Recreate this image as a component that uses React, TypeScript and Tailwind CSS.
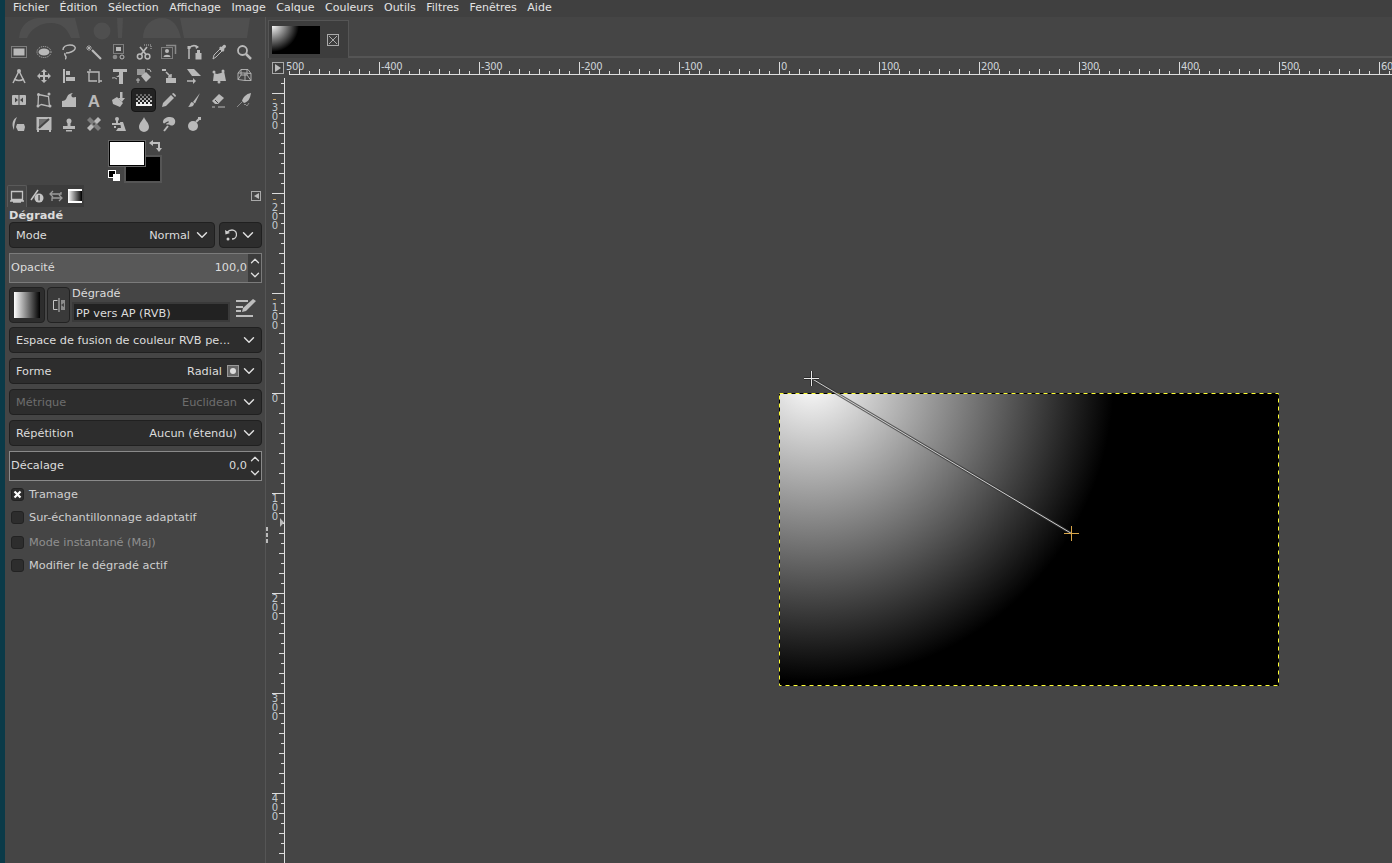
import React from "react";
import { ChevronDown, ChevronUp } from "lucide-react";

const FONT = "font-['DejaVu_Sans',sans-serif]";
const C = "#b9b9b9";

const dotted = { stroke: C, strokeWidth: 1, strokeDasharray: "1 1", fill: "none" };
const line = { stroke: C, fill: "none", strokeWidth: 1.5 };

const GRAD_FILL = ["#666", "#808080", "#a0a0a0", "#c4c4c4", "#e8e8e8", "#f2f2f2"];

const icons: React.ReactNode[] = [
  // row 1
  <><rect x="0.5" y="2.5" width="15" height="11" {...dotted} /><rect x="2.5" y="4.500" width="11" height="7" fill={C} /></>,
  <><ellipse cx="8" cy="8" rx="7" ry="5.5" {...dotted} /><ellipse cx="8" cy="8" rx="5.5" ry="3.5" fill={C} /></>,
  <><path d="M2 6c0-3 3-5 7-5s6 2 5 4-5 4-9 4M4 9c-1 2 1 3 1 4s0 2-1 2" {...line} /></>,
  <><path d="M6 6l9 9" stroke={C} strokeWidth="2.2" /><path d="M3 1v6M0 4h6M1 2l4 4M5 2l-4 4" stroke={C} strokeWidth="0.8" /></>,
  <><rect x="2.5" y="0.5" width="10" height="9" {...dotted} /><rect x="5" y="3" width="5" height="4" fill={C} /><circle cx="4" cy="13" r="2.3" fill="#8a8a8a" /><circle cx="11" cy="13" r="2" fill="none" stroke={C} /></>,
  <><circle cx="3.8" cy="12.5" r="2.4" {...line} /><circle cx="11.5" cy="12.5" r="2.4" {...line} /><path d="M5 10.5L11 3M10 10.5L4 3" stroke={C} strokeWidth="1.7" /><path d="M8 1h7v4" {...dotted} /></>,
  <><path d="M5 1.5h9.5V10" stroke="#8a8a8a" strokeWidth="1.5" fill="none" /><rect x="0.5" y="3.5" width="11" height="11" {...dotted} /><circle cx="6" cy="7" r="2" fill={C} /><path d="M2.5 13c0-3 7-3 7 0z" fill={C} /></>,
  <><path d="M3 15V4M3 4c3-3 6-3 9-1" {...line} /><path d="M9 1l4 2-3 2z" fill={C} /><rect x="1.5" y="2" width="3" height="3" fill={C} /><rect x="9.5" y="9" width="6" height="6.5" fill={C} /><rect x="11" y="6" width="3" height="3" fill={C} /></>,
  <><path d="M2 15l1-4 6-6 2 2-6 6z" fill="none" stroke={C} /><path d="M8 4l4 4 1.5-2-.5-1 2-2c0-2-1-2.500-2.500-2l-2 2-1-.5z" fill={C} /></>,
  <><circle cx="6.500" cy="6.500" r="4.500" fill="none" stroke={C} strokeWidth="1.800" /><path d="M10 10l5 5" stroke={C} strokeWidth="2.500" /></>,
  // row 2
  <><path d="M8 3L2 15M8 3l6 12M3 11q5 3 10 0" {...line} /><circle cx="8" cy="3" r="2" fill={C} /></>,
  <><path d="M8 1l3 3H9v3h3V5l3 3-3 3V9H9v3h2l-3 3-3-3h2V9H4v2L1 8l3-3v2h3V4H5z" fill={C} /></>,
  <><rect x="2" y="1" width="2" height="14" fill={C} /><rect x="5" y="3" width="4" height="4" fill={C} /><rect x="5" y="9" width="9" height="4" fill={C} /></>,
  <><path d="M1 4h3M4 1v2M4 4h9v8M3 4v9h8" stroke={C} strokeWidth="1.400" fill="none" /><path d="M13 12v3M13 13h3" stroke={C} strokeWidth="1.400" /></>,
  <><path d="M2 1h14v3h-4v12H8V9H5l3-2V4H2z" fill={C} /><path d="M1 10q3-1 5 1" stroke={C} fill="none" /></>,
  <><rect x="1" y="1" width="8" height="6" fill="#9a9a9a" /><path d="M5 8l5-4 5 5-5 5z" fill={C} /><path d="M11 1q4 0 4 3M2 10v5M0 12h4" stroke={C} fill="none" /></>,
  <><rect x="1" y="1" width="4" height="2" fill={C} /><path d="M5 4l5 5M7 9h3V6" stroke={C} strokeWidth="1.500" fill="none" /><rect x="5" y="10" width="10" height="5" fill={C} /></>,
  <><path d="M1 1h7l7 7H6z" fill={C} /><path d="M1 13h7" stroke={C} strokeWidth="1.500" /><path d="M7 10l3 3-3 3z" fill={C} /></>,
  <><path d="M2 13L3 5l3 1 4-1 3-2 2 10z" fill={C} /><circle cx="3" cy="4" r="1.500" fill={C} /><circle cx="12" cy="3" r="1.500" fill={C} /><circle cx="8" cy="14" r="1.500" fill={C} /></>,
  <><path d="M5 1.500h7l3 4v7H9l-7-1V5zM5 1.500V7l-3 4.500M5 7h6l4 5.500M11 7V1.500M2 5h7l6 .5M9 5v7.500" stroke={C} fill="none" strokeWidth="0.900" /></>,
  // row 3
  <><rect x="1" y="3" width="14" height="10" rx="1" fill={C} /><path d="M7 8L4 5.500v5zM9 8l3-2.500v5z" fill="#454545" /><rect x="7.500" y="3" width="1" height="10" fill="#454545" /></>,
  <><path d="M2.500 2.500l10 2 1 10-8-2-3.500 1.500z" stroke={C} strokeWidth="1.300" fill="none" /><circle cx="2.500" cy="2.500" r="1.500" fill={C} /><circle cx="13" cy="2" r="1.500" fill={C} /><circle cx="14" cy="14" r="1.500" fill={C} /><circle cx="2" cy="14" r="1.500" fill={C} /></>,
  <><path d="M1 15V9c2 0 4-1 5-4s4-4 6-4c-2 1-2 3-1 4s3 0 4 0v10z" fill={C} /></>,
  <text x="8" y="14.500" textAnchor="middle" fontFamily="'Liberation Sans',sans-serif" fontWeight="700" fontSize="17" fill={C}>A</text>,
  <><path d="M1 8l5-3 6 6-3 4-7-3z" fill={C} /><rect x="9" y="0" width="2.500" height="7" fill={C} /><path d="M7 6h7l-3.200 4z" fill={C} /></>,
  <>
    {Array.from({ length: 6 }).flatMap((_, r) =>
      Array.from({ length: 8 }).map((_, c) =>
        (r + c) % 2 === 0 || r === 5 ? <rect key={r + "-" + c} x={c * 2} y={2 + r * 2} width="2" height="2" fill={GRAD_FILL[r]} /> : null
      )
    )}
    <rect x="0" y="12" width="16" height="2" fill="#f2f2f2" />
  </>,
  <><path d="M1 15l1-4 8-8 3 3-8 8z" fill={C} /><path d="M11 2l1-1c1 0 3 2 3 3l-1 1z" fill={C} /></>,
  <><path d="M14 1L7 10l2 1.500z" fill={C} /><path d="M6 10c-2 .5-2 4-4 5 4 0 6-1 6-3.500z" fill={C} /></>,
  <><path d="M1 9l7-7 5 4-6 6H4z" fill={C} /><path d="M4 8l3 3" stroke="#454545" /><path d="M1 15h3M7 15h7" stroke={C} /></>,
  <><path d="M15 1C10 2 7 5 6 9l2 2c4-1 6-4 7-10z" fill={C} /><path d="M1 15l5-5M8 13l1-1 2 2 2-3" stroke="#8a8a8a" fill="none" /></>,
  // row 4
  <><path d="M6 1C2 3 0 8 3 14 3 9 4 5 6 1z" fill={C} /><path d="M6 8h7l1 3-1 4H7l-2-4z" fill={C} /></>,
  <><rect x="0.500" y="1" width="15" height="13" fill={C} /><path d="M3 12L13 3H3z" fill="#6f6f6f" /><path d="M3 12L13 3" stroke="#454545" strokeWidth="2" /><rect x="1" y="14" width="2" height="2" fill={C} /><rect x="13" y="14" width="2" height="2" fill={C} /></>,
  <><circle cx="8" cy="5" r="2.500" fill={C} /><rect x="6.500" y="6" width="3" height="4" fill={C} /><path d="M2 10h12v3H2z" fill={C} /><rect x="5" y="14" width="6" height="1.500" fill={C} /></>,
  <><path d="M12 1l3 3L4 15l-3-3z" fill={C} /><path d="M4 1l11 11-3 3L1 4z" fill="#7c7c7c" /><circle cx="8" cy="8" r="1" fill="#454545" /></>,
  <><circle cx="6" cy="3" r="2" fill={C} /><rect x="5" y="4" width="2" height="3" fill={C} /><path d="M1 7h9v2H1zM3 10h2v2H3z" fill={C} /><path d="M9 6l3 0 3 9H5l2-3h3z" fill={C} /></>,
  <path d="M8 1c1 3 5 6 5 10a5 5 0 0 1-10 0c0-4 4-7 5-10z" fill={C} />,
  <><path d="M2 6c0-3 3-5 7-5s6 3 5 6-4 3-5 2-4 0-4-1 3-1 3-2-3 0-4 1-2 0-2-1z" fill={C} /><path d="M3 15l4-5" stroke={C} strokeWidth="2" /></>,
  <><circle cx="7" cy="10" r="5" fill={C} /><path d="M10 6l4-4" stroke={C} strokeWidth="2.200" /><rect x="12" y="1" width="3" height="3" fill={C} /></>,
];

function Combo({ label, value, disabled, extra }: { label: string; value?: string; disabled?: boolean; extra?: React.ReactNode }) {
  return (
    <div className="flex h-[26px] items-center rounded-[4px] border border-[#202020] bg-[#2d2d2d] pl-[6px] pr-[3px]">
      <span className={"pt-[2px] " + (disabled ? "text-[#6d6d6d]" : "text-[#dcdcdc]")}>{label}</span>
      <span className={"ml-auto pt-[2px] " + (disabled ? "text-[#6d6d6d]" : "text-[#dcdcdc]")}>{value}</span>
      {extra}
      <ChevronDown size={18} strokeWidth={1.9} className={(extra ? "ml-[1px]" : "ml-[3px]") + " text-[#e0e0e0]"} />
    </div>
  );
}

function Spin({ light }: { light?: boolean }) {
  return (
    <div className={"ml-[1px] flex h-full w-[13px] flex-col items-center justify-between " + (light ? "bg-[#2e2e2e]" : "bg-[#3c3c3c]")}>
      <ChevronUp size={14} strokeWidth={2.2} className="text-[#e0e0e0]" />
      <ChevronDown size={14} strokeWidth={2.2} className="text-[#e0e0e0]" />
    </div>
  );
}

function Check({ label, checked, muted, className }: { label: string; checked?: boolean; muted?: boolean; className?: string }) {
  return (
    <div className={"flex h-[13px] items-center gap-[5px] pl-[2px] " + (className ?? "")}>
      <div className="flex h-[13px] w-[13px] items-center justify-center rounded-[3px] border border-[#222] bg-[#2d2d2d]">
        {checked && (
          <svg width="9" height="9" viewBox="0 0 9 9">
            <path d="M1.500 1.500l6 6M7.500 1.500l-6 6" stroke="#fff" strokeWidth="2.200" />
          </svg>
        )}
      </div>
      <span className={muted ? "text-[#8f8f8f]" : "text-[#cfcfcf]"}>{label}</span>
    </div>
  );
}

function HRuler() {
  const ticks = [];
  for (let x = 290; x <= 1392; x += 10) {
    const rel = x - 780;
    const px = x - 1 - 268 + 0.5;
    if (rel % 100 === 0) ticks.push(<path key={x} d={`M${px} 2V14`} stroke="#ddd" />);
    else ticks.push(<path key={x} d={`M${px} ${rel % 20 === 0 ? 9 : 11}V14`} stroke="#ddd" />);
  }
  const labels = [];
  for (let v = -500; v <= 600; v += 100) {
    labels.push(
      <text key={v} x={v === -500 ? 18 : 779 + v - 268 + 2} y={10} fontFamily="'DejaVu Sans',sans-serif" fontSize="10" letterSpacing="-0.4" fill="#cdd3d8">
        {v === -500 ? "500" : v}
      </text>
    );
  }
  return (
    <svg width="1124" height="15" className="block">
      {ticks}
      {labels}
      <path d="M21 14.500H1124" stroke="#ddd" />
    </svg>
  );
}

function VRuler() {
  const ticks = [];
  for (let y = 83; y <= 863; y += 10) {
    const rel = y - 393;
    const yy = y - 78 + 0.5;
    if (rel % 100 === 0) ticks.push(<path key={y} d={`M4 ${yy}H16`} stroke="#ddd" />);
    else ticks.push(<path key={y} d={`M${rel % 20 === 0 ? 11 : 13} ${yy}H16`} stroke="#ddd" />);
  }
  const labels = [];
  for (let v = -300; v <= 400; v += 100) {
    const s = String(Math.abs(v)).split("");
    const base = 393 + v - 78;
    if (v < 0) labels.push(<path key={"m" + v} d={`M5 ${base + 6.500}H8`} stroke="#c9a15e" />);
    s.forEach((d, i) => {
      const off = v < 0 ? 18 + i * 9 : 9 + i * 9;
      labels.push(
        <text key={v + "-" + i} x={7} y={base + off} textAnchor="middle" fontFamily="'DejaVu Sans',sans-serif" fontSize="10" fill="#c3cad0">
          {d}
        </text>
      );
    });
  }
  return (
    <svg width="17" height="785" className="block shrink-0">
      {ticks}
      {labels}
      <path d="M16.500 0V785" stroke="#ddd" />
      <path d="M12 440l4 4.500-4 4.500z" fill="#bdbdbd" />
    </svg>
  );
}

const MENUS = ["Fichier", "Édition", "Sélection", "Affichage", "Image", "Calque", "Couleurs", "Outils", "Filtres", "Fenêtres", "Aide"];

export default function App() {
  return (
    <div className={"flex h-[863px] w-[1392px] overflow-hidden bg-[#454545] text-[11.300px] leading-none text-[#dcdcdc] " + FONT}>
      <div className="w-[5px] shrink-0 bg-[#0b3a48]" />
      <div className="flex min-w-0 flex-1 flex-col">
        <div className="flex h-[17px] shrink-0 items-center bg-[#404040] pb-[2px] pl-[2.750px] text-[11px] text-[#e4e4e4]">
          {MENUS.map((m) => (
            <span key={m} className="px-[5.250px]">{m}</span>
          ))}
        </div>
        <div className="flex min-h-0 flex-1">
          {/* Left dock */}
          <div className="relative w-[261px] shrink-0 border-r border-[#555]">
            <svg className="absolute left-0 top-0" width="255" height="23" viewBox="0 0 255 23">
              <path d="M14 21C15 8 24 2 33 1H70L75 21H66C62 11 56 6 46 6 35 6 26 12 22 21z" fill="#4f4f4f" />
              <circle cx="97" cy="14" r="8.500" fill="#4f4f4f" />
              <path d="M112 1h6l-1 20h-4z" fill="#4f4f4f" />
              <path d="M138 21c0-12 8-20 19-20s16 8 19 20z" fill="#4f4f4f" />
              <path d="M175 1h70l-3 20h-63z" fill="#4f4f4f" />
            </svg>
            <div className="relative grid grid-cols-[repeat(10,25px)] auto-rows-[24px] pl-[1px] pt-[23px]">
              {icons.map((ic, i) => (
                <div key={i} className={"flex items-center justify-center " + (i === 25 ? "rounded-[4px] border border-[#161616] bg-[#232323]" : "")}>
                  <svg width="16" height="16" viewBox="0 0 16 16">{ic}</svg>
                </div>
              ))}
            </div>
            {/* Colors */}
            <div className="relative ml-[103px] mt-[4px] h-[45px] w-[56px]">
              <div className="absolute left-[16px] top-[15px] h-[28px] w-[38px] border-2 border-[#555] bg-black" />
              <div className="absolute left-[1px] top-[1px] h-[25px] w-[36px] border border-black bg-white outline outline-1 outline-[#666]" />
              <svg className="absolute left-[41px] top-0" width="13" height="13" viewBox="0 0 13 13">
                <path d="M0 3l4-3v6zM4 2h7v6H9V4H4zM7 8h6l-3 4z" fill="#bdbdbd" />
              </svg>
              <div className="absolute left-0 top-[30px] h-[8px] w-[8px] border border-white bg-black" />
              <div className="absolute left-[5px] top-[34px] h-[7px] w-[7px] bg-white" />
            </div>
            {/* Tabs */}
            <div className="flex h-[22px] items-center">
              <div className="ml-[2px] flex h-full w-[20px] items-center justify-center rounded-t-[2px] border border-b-0 border-[#5a5a5a]">
                <svg width="14" height="13" viewBox="0 0 14 13"><path d="M1.500 1.500h11v8h-11zM3 12h8M0 11h14" stroke="#c4c4c4" fill="none" strokeWidth="1.300" /></svg>
              </div>
              <div className="flex h-full bg-[#3c3c3c]">
                <div className="flex w-[19px] items-center justify-center">
                  <svg width="14" height="14" viewBox="0 0 14 14"><path d="M1 11L8 1" stroke="#c4c4c4" strokeWidth="1.500" /><circle cx="9" cy="9" r="4.500" fill="#c4c4c4" /><rect x="8.400" y="6" width="1.300" height="5.500" fill="#3c3c3c" /></svg>
                </div>
                <div className="flex w-[19px] items-center justify-center">
                  <svg width="14" height="12" viewBox="0 0 14 12"><path d="M1 4h11V2M4 1L1 4l3 3M13 8H3v3M10 5l3 3-3 3" stroke="#9a9a9a" fill="none" strokeWidth="1.300" /></svg>
                </div>
                <div className="flex w-[19px] items-center justify-center">
                  <div className="h-[14px] w-[14px] border-y-2 border-white bg-black bg-[linear-gradient(to_right,#fff,#000)]" />
                </div>
              </div>
              <div className="ml-auto mr-[4px] flex h-[10px] w-[10px] items-center justify-center border border-[#aaa]">
                <div className="h-0 w-0 border-y-[3px] border-r-[5px] border-y-transparent border-r-[#bbb]" />
              </div>
            </div>
            {/* Options */}
            <div className="flex flex-col pl-[4px] pr-[3px]">
              <div className="mt-[3px] flex h-[12px] items-center font-bold text-[#dcdcdc]">Dégradé</div>
              <div className="flex gap-[4px]">
                <div className="flex h-[26px] w-[206px] shrink-0 items-center rounded-[4px] border border-[#202020] bg-[#2d2d2d] pl-[6px] pr-[3px]">
                  <span className="pt-[2px]">Mode</span>
                  <span className="ml-auto pt-[2px]">Normal</span>
                  <ChevronDown size={18} strokeWidth={1.9} className="ml-[3px] text-[#e0e0e0]" />
                </div>
                <div className="flex h-[26px] w-[43px] shrink-0 items-center justify-center gap-[2px] rounded-[4px] border border-[#202020] bg-[#2d2d2d]">
                  <svg width="12" height="12" viewBox="0 0 12 12"><path d="M2 3.500Q4 1 7 1a4.500 4.500 0 0 1 0 9" stroke="#cfcfcf" fill="none" strokeWidth="1.300" /><path d="M0 1l.500 4.500L5 4z" fill="#cfcfcf" /><circle cx="3" cy="10" r="1.500" fill="#cfcfcf" /></svg>
                  <ChevronDown size={18} strokeWidth={1.9} className="text-[#e0e0e0]" />
                </div>
              </div>
              <div className="mt-[5px] flex h-[30px] items-center border border-[#7b7b7b] bg-[#585858] pl-[1px] text-[#dcdcdc]">
                <span>Opacité</span>
                <span className="ml-auto">100,0</span>
                <Spin />
              </div>
              <div className="mt-[4px] flex h-[36px]">
                <div className="flex h-[36px] w-[36px] items-center justify-center rounded-[4px] border border-[#222] bg-[#2d2d2d]">
                  <div className="h-[26px] w-[26px] bg-[linear-gradient(to_right,#fff,#000)]" />
                </div>
                <div className="ml-[2px] flex h-[36px] w-[23px] items-center justify-center rounded-[4px] border border-[#222] bg-[#3a3a3a]">
                  <svg width="14" height="14" viewBox="0 0 14 14"><path d="M5.500 2.500h-4v9h4M7 0v14" stroke="#c4c4c4" fill="none" /><rect x="9" y="2" width="4" height="10" fill="#8c8c8c" /><path d="M9 7l3-2v4z" fill="#454545" /></svg>
                </div>
                <div className="ml-[2px] flex w-[158px] flex-col">
                  <div className="flex h-[13px] items-center text-[#dcdcdc]">Dégradé</div>
                  <div className="mt-[2px] flex h-[20px] items-center border-2 border-[#3a3a3a] bg-[#222] pl-[2px] pt-[3px] text-[#dcdcdc]">PP vers AP (RVB)</div>
                </div>
                <svg className="ml-[6px] mt-[11px]" width="22" height="20" viewBox="0 0 22 20">
                  <path d="M0 3h12M0 9h7M0 13h5M0 18h17" stroke="#bdbdbd" strokeWidth="2" />
                  <path d="M6 14l1-4 10-9 3 2L10 13z" fill="#bdbdbd" />
                </svg>
              </div>
              <div className="mt-[4px] flex flex-col gap-[5px]">
                <Combo label="Espace de fusion de couleur RVB pe..." />
                <Combo
                  label="Forme"
                  value="Radial"
                  extra={
                    <div className="ml-[5px] flex h-[12px] w-[12px] items-center justify-center border border-[#999] bg-[#666]">
                      <div className="h-[6px] w-[6px] rounded-full bg-[#ddd]" />
                    </div>
                  }
                />
                <Combo label="Métrique" value="Euclidean" disabled />
                <Combo label="Répétition" value="Aucun (étendu)" />
              </div>
              <div className="mt-[5px] flex h-[30px] items-center border border-[#8a8a8a] bg-[#2e2e2e] pl-[1px] text-[#dcdcdc]">
                <span>Décalage</span>
                <span className="ml-auto">0,0</span>
                <Spin light />
              </div>
              <Check label="Tramage" checked className="mt-[7px]" />
              <Check label="Sur-échantillonnage adaptatif" className="mt-[10px]" />
              <Check label="Mode instantané (Maj)" muted className="mt-[12px]" />
              <Check label="Modifier le dégradé actif" className="mt-[10px]" />
            </div>
          </div>
          {/* Sash */}
          <div className="flex w-[2px] shrink-0 flex-col items-center pt-[510px]">
            <div className="flex flex-col gap-[2px]">
              <div className="h-[4px] w-[2px] bg-[#bbb]" />
              <div className="h-[4px] w-[2px] bg-[#bbb]" />
              <div className="h-[4px] w-[2px] bg-[#bbb]" />
            </div>
          </div>
          {/* Main */}
          <div className="flex min-w-0 flex-1 flex-col">
            <div className="mt-[3px] flex h-[38px] shrink-0">
              <div className="flex h-[38px] w-[81px] items-center border border-b-0 border-[#555] bg-[#3d3d3d] pl-[3px]">
                <div className="h-[28px] w-[48px] bg-[radial-gradient(circle_at_0px_-1px,#fff_0px,#000_27px)]" />
                <div className="relative ml-[7px] h-[12px] w-[12px] border border-[#aaa]">
                  <svg className="absolute inset-0" width="10" height="10" viewBox="0 0 10 10"><path d="M1 1l8 8M9 1l-8 8" stroke="#aaa" /></svg>
                </div>
              </div>
              <div className="mt-[36px] h-[2px] flex-1 bg-[#555]" />
            </div>
            <div className="flex h-[20px] shrink-0 items-start pt-[2px]">
              <HRuler />
            </div>
            <div className="relative flex min-h-0 flex-1">
              <VRuler />
              <div className="absolute left-[4px] top-[-16px] flex h-[12px] w-[12px] items-center justify-center border border-[#aaa] bg-[#3f3f3f]">
                <div className="h-0 w-0 border-y-[4px] border-l-[6px] border-y-transparent border-l-[#bbb]" />
              </div>
              <div className="relative flex-1">
                {/* canvas: offsets relative to (285, 78) */}
                <div className="absolute left-[494px] top-[315px] h-[293px] w-[500px] bg-[radial-gradient(circle_303px_at_32px_-15px,#fff_0px,#000_303px)]" />
                <svg className="absolute left-0 top-0" width="1107" height="785">
                  <g transform="translate(-285 -78)">
                    <rect x="779.500" y="393.500" width="499" height="292" fill="none" stroke="#000" />
                    <rect x="779.500" y="393.500" width="499" height="292" fill="none" stroke="#ffff33" strokeDasharray="4 4" />
                    <path d="M811.500 378.500L1071.500 533.500" stroke="#333" strokeWidth="3" opacity="0.700" />
                    <path d="M811.500 378.500L1071.500 533.500" stroke="#cfcfcf" strokeWidth="1" />
                    <path d="M804 378.500h15M811.500 371v15" stroke="#222" strokeWidth="3" opacity="0.700" />
                    <path d="M804 378.500h15M811.500 371v15" stroke="#e8e8e8" strokeWidth="1" />
                    <path d="M1064 533.500h15M1071.500 526v15" stroke="#d8a548" strokeWidth="1" />
                  </g>
                </svg>
              </div>
            </div>
          </div>
        </div>
      </div>
    </div>
  );
}
